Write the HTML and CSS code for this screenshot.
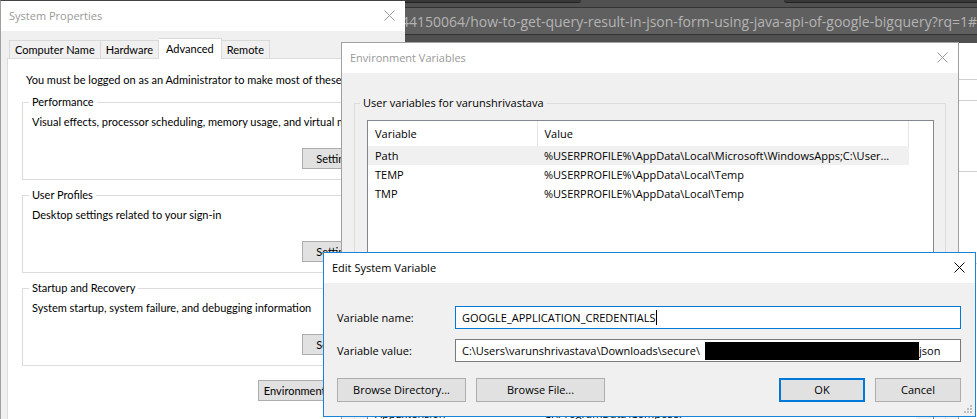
FILE: index.html
```html
<!DOCTYPE html>
<html lang="en">
<head>
<meta charset="utf-8">
<title>Edit System Variable</title>
<link rel="stylesheet" href="styles.css">
</head>
<body>
<div class="desktop">
  <div class="browser">
    <div class="tabstrip"><span class="tab tab-left"></span><span class="tab tab-right"></span></div>
    <div class="address">44150064/how-to-get-query-result-in-json-form-using-java-api-of-google-bigquery?rq=1#</div>
    <div class="toolbar-end"></div>
    <div class="page">
      <div class="rule rule-a"></div>
      <div class="rule rule-b"></div>
      <div class="rule rule-c"></div>
      <div class="rule rule-d"></div>
    </div>
  </div>

  <section class="window system-properties">
    <header class="titlebar">
      <h2>System Properties</h2>
      <button class="close" aria-label="Close"><svg viewBox="0 0 11 11"><path d="M.5 .5l10 10M10.5 .5l-10 10"/></svg></button>
    </header>
    <nav class="tabs">
      <button>Computer Name</button><button>Hardware</button><button class="active">Advanced</button><button>Remote</button>
    </nav>
    <div class="sheet">
      <p class="notice">You must be logged on as an Administrator to make most of these changes.</p>
      <fieldset class="group">
        <legend>Performance</legend>
        <p>Visual effects, processor scheduling, memory usage, and virtual memory</p>
        <button class="button small">Settings...</button>
      </fieldset>
      <fieldset class="group">
        <legend>User Profiles</legend>
        <p>Desktop settings related to your sign-in</p>
        <button class="button small">Settings...</button>
      </fieldset>
      <fieldset class="group">
        <legend>Startup and Recovery</legend>
        <p>System startup, system failure, and debugging information</p>
        <button class="button small">Settings...</button>
      </fieldset>
      <button class="button small environment">Environment Variables...</button>
    </div>
  </section>

  <section class="window environment-variables">
    <header class="titlebar">
      <h2>Environment Variables</h2>
      <button class="close" aria-label="Close"><svg viewBox="0 0 11 11"><path d="M.5 .5l10 10M10.5 .5l-10 10"/></svg></button>
    </header>
    <fieldset class="variables user">
      <legend>User variables for varunshrivastava</legend>
      <div class="list">
        <table>
          <thead><tr><th>Variable</th><th>Value</th></tr></thead>
          <tbody>
            <tr class="selected"><td>Path</td><td>%USERPROFILE%\AppData\Local\Microsoft\WindowsApps;C:\User...</td></tr>
            <tr><td>TEMP</td><td>%USERPROFILE%\AppData\Local\Temp</td></tr>
            <tr><td>TMP</td><td>%USERPROFILE%\AppData\Local\Temp</td></tr>
          </tbody>
        </table>
      </div>
    </fieldset>
    <div class="variables system">
      <div class="list">
        <table>
          <tbody><tr><td>AppExtension</td><td>C:\ProgramData\Composer</td></tr></tbody>
        </table>
        <div class="scrollbar"></div>
      </div>
    </div>
  </section>

  <section class="window edit-variable">
    <header class="titlebar">
      <h2>Edit System Variable</h2>
      <button class="close" aria-label="Close"><svg viewBox="0 0 11 11"><path d="M.5 .5l10 10M10.5 .5l-10 10"/></svg></button>
    </header>
    <form class="form">
      <label for="name">Variable name:</label>
      <div class="field focused"><input id="name" value="GOOGLE_APPLICATION_CREDENTIALS"><span class="caret"></span></div>
      <label for="value">Variable value:</label>
      <div class="field"><input id="value" value="C:\Users\varunshrivastava\Downloads\secure\"><span class="redacted"></span><span class="suffix">json</span></div>
    </form>
    <footer class="actions">
      <button class="button wide">Browse Directory...</button>
      <button class="button wide">Browse File...</button>
      <button class="button primary">OK</button>
      <button class="button">Cancel</button>
    </footer>
    <svg class="grip" viewBox="0 0 8 8"><path d="M6 0h2v2h-2zM3 3h2v2h-2zM6 3h2v2h-2zM0 6h2v2h-2zM3 6h2v2h-2zM6 6h2v2h-2z"/></svg>
  </section>
</div>
</body>
</html>
```
FILE: styles.css
```css
* { box-sizing: border-box; }

body {
  margin: 0;
  color: #000;
  font: 11px/16px "Open Sans", "Noto Sans", sans-serif;
}

h2, p { margin: 0; font-weight: 400; }
button, input { font: inherit; color: inherit; }
button { padding: 0; white-space: nowrap; }

.desktop { position: relative; height: 100vh; overflow: hidden; background: #fff; }

/* Browser behind the dialogs */
.tabstrip { display: flex; justify-content: space-between; height: 8px; background: #505050; border-bottom: 1px solid #333; }
.tab { height: 3px; background: #383838; border-bottom: 1px solid #222; }
.tab-left { width: 581px; border-radius: 0 0 3px 0; }
.tab-right { width: 193px; border-radius: 0 0 0 3px; }
.address { height: 27px; padding: 0 0 0 401px; background: #5f5f5f; border-bottom: 1px solid #333; color: #b4b4b4; font-size: 14px; line-height: 27px; white-space: nowrap; }
.toolbar-end { height: 8px; background: #505050; }
.rule { border-bottom: 1px solid #d0d0d0; }
.rule-a { height: 37px; }
.rule-b { height: 21px; }
.rule-c { height: 71px; }
.rule-d { height: 92px; }

/* Windows */
.window { position: absolute; background: #f0f0f0; border: 1px solid #a0a0a0; }
.titlebar { display: flex; align-items: center; justify-content: space-between; height: 30px; padding: 0 10px 1px 8px; background: #fff; color: #999; }
.titlebar h2 { font-size: 11px; line-height: 16px; }
.close { display: flex; width: 11px; height: 11px; border: 0; background: none; }
.close svg { width: 11px; height: 11px; fill: none; stroke: currentColor; }
.button { height: 24px; border: 1px solid #adadad; background: #e1e1e1; }

/* System Properties */
.system-properties { left: 0; top: 0; width: 405px; height: 480px; border-top-color: #444; border-right: 0; font: 11px/14px Lato, "Liberation Sans", sans-serif; }
.system-properties .titlebar h2 { font-family: "Open Sans", "Noto Sans", sans-serif; }
.tabs { display: flex; align-items: flex-end; height: 27px; padding-left: 8px; }
.tabs button { height: 18px; border: 1px solid #d9d9d9; border-width: 1px 1px 0 0; background: #f0f0f0; padding: 0 5px; }
.tabs button:first-child { border-left-width: 1px; }
.tabs .active { position: relative; height: 21px; margin-bottom: -1px; padding: 0 7px; background: #fff; }
.sheet { height: 400px; margin: 0 6px; padding: 14px 13px 0 14px; border: 1px solid #dcdcdc; background: #fff; }
.notice { padding-left: 4px; white-space: nowrap; }
.group { display: flex; flex-direction: column; height: 85px; margin: 8px 0 0; padding: 6px 7px 10px 9px; border: 1px solid #dcdcdc; min-width: 0; white-space: nowrap; }
.group legend { margin-left: -3px; padding: 0 3px; }
.group p { width: 0; }
.small { width: 75px; height: 21px; }
.group .small { align-self: flex-end; margin-top: auto; }
.environment { display: block; width: 127px; margin: 14px 0 0 auto; }

/* Environment Variables */
.environment-variables { left: 341px; top: 42px; width: 618px; height: 600px; }
.variables { margin: 22px 12px 0; padding: 9px 11px 0 12px; border: 1px solid #dcdcdc; }
.variables legend { margin-left: -7px; padding: 0 3px; }
.list { height: 172px; border: 1px solid #828790; background: #fff; }
table { width: 541px; table-layout: fixed; border-collapse: collapse; }
th, td { height: 19px; padding: 0 0 0 7px; text-align: left; font-weight: 400; line-height: 19px; white-space: nowrap; overflow: hidden; }
th { height: 25px; border-right: 1px solid #e5e5e5; }
th:first-child, td:first-child { width: 169px; }
.selected { background: #f0f0f0; }
.variables.system { margin-top: 100px; }
.system .list { display: flex; justify-content: space-between; }
.system table { align-self: flex-start; }
.scrollbar { width: 17px; background: #f0f0f0; }

/* Edit System Variable */
.edit-variable { left: 323px; top: 252px; width: 653px; border-color: #1883d7; }
.edit-variable .titlebar { color: #000; }
.form { display: grid; grid-template-columns: 118px 1fr; gap: 10px 0; align-items: center; padding: 23px 14px 0 13px; }
.field { display: flex; align-items: center; height: 23px; padding-left: 6px; border: 1px solid #7a7a7a; background: #fff; }
.field input { border: 0; outline: 0; padding: 0; background: none; min-width: 0; }
.focused { border-color: #0078d7; }
#name { field-sizing: content; }
#value { width: 243px; }
.caret { width: 1px; height: 15px; background: #000; }
.redacted { width: 214px; height: 18px; background: #000; }
.actions { display: flex; gap: 10px; padding: 16px 14px 14px 13px; }
.actions .button { width: 86px; }
.actions .wide { width: 129px; }
.actions .primary { margin-left: auto; border: 2px solid #0078d7; }
.grip { position: absolute; right: 3px; bottom: 3px; width: 8px; height: 8px; fill: #bfbfbf; }
```
